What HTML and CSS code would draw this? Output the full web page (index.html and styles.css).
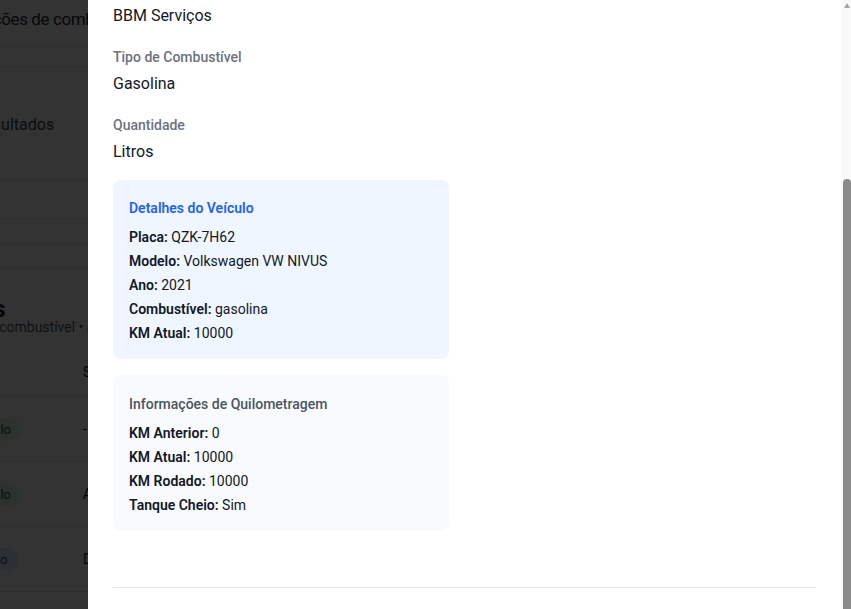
FILE: index.html
```html
<!DOCTYPE html>
<html lang="pt-BR">
<head>
<meta charset="utf-8">
<title>Detalhes da requisição</title>
<link rel="stylesheet" href="styles.css">
</head>
<body>
<div class="page">
  <header class="page-head"><h1 class="page-title">Requisições de combustível</h1></header>
  <div class="page-strip"></div>
  <div class="filters"><span class="filters-text">Filtrar resultados</span></div>
  <div class="filter-row tall"></div>
  <div class="filter-row"></div>
  <div class="filter-row"></div>
  <section class="list">
    <h2 class="list-title">Requisições</h2>
    <p class="list-sub">12 requisições de combustível • atualizado hoje</p>
    <div class="table">
      <div class="trow thead"><span class="cell-badge">Tipo</span><span class="cell-text">Solicitante</span></div>
      <div class="trow"><span class="cell-badge"><span class="badge green">Por veículo</span></span><span class="cell-text">-</span></div>
      <div class="trow"><span class="cell-badge"><span class="badge green">Por veículo</span></span><span class="cell-text">Ana Souza</span></div>
      <div class="trow"><span class="cell-badge"><span class="badge blue">Por cartão</span></span><span class="cell-text">Diego Lima</span></div>
    </div>
  </section>
</div>

<div class="overlay"></div>

<aside class="drawer">
  <div class="drawer-content">
    <div class="fields">
      <div class="field"><p class="value">BBM Serviços</p></div>
      <div class="field"><p class="label">Tipo de Combustível</p><p class="value">Gasolina</p></div>
      <div class="field"><p class="label">Quantidade</p><p class="value">Litros</p></div>
    </div>
    <div class="cards">
      <div class="card-col">
        <div class="card card-blue">
          <h3 class="card-title">Detalhes do Veículo</h3>
          <ul class="info">
            <li><strong>Placa:</strong> QZK-7H62</li>
            <li><strong>Modelo:</strong> Volkswagen VW NIVUS</li>
            <li><strong>Ano:</strong> 2021</li>
            <li><strong>Combustível:</strong> gasolina</li>
            <li><strong>KM Atual:</strong> 10000</li>
          </ul>
        </div>
        <div class="card card-gray">
          <h3 class="card-title">Informações de Quilometragem</h3>
          <ul class="info">
            <li><strong>KM Anterior:</strong> 0</li>
            <li><strong>KM Atual:</strong> 10000</li>
            <li><strong>KM Rodado:</strong> 10000</li>
            <li><strong>Tanque Cheio:</strong> Sim</li>
          </ul>
        </div>
      </div>
      <div class="card-col"></div>
    </div>
    <div class="footer"></div>
  </div>
  <div class="scrollbar"><span class="sb-arrow"></span><span class="sb-thumb"></span></div>
</aside>
</body>
</html>
```

FILE: styles.css
```css
* { box-sizing: border-box; }
html, body { margin: 0; height: 100%; }
body {
  font-family: Roboto, "Noto Sans", "Liberation Sans", sans-serif;
  color: #111827;
  background: #ffffff;
  overflow: hidden;
}

/* ---------- background page ---------- */
.page { margin-left: -76px; width: 820px; }
.page-head { height: 47px; border-bottom: 1px solid #e5e7eb; padding: 6px 0 0 16px; }
.page-title { margin: 0; font-size: 17px; line-height: 26px; letter-spacing: -0.4px; font-weight: 400; color: #1f2937; white-space: nowrap; }
.page-strip { height: 20px; border-bottom: 1px solid #e5e7eb; }
.filters { height: 113px; border-bottom: 1px solid #e5e7eb; display: flex; align-items: center; padding-left: 10px; }
.filters-text { font-size: 16px; color: #374151; padding-top: 3px; }
.filter-row { height: 25px; border-bottom: 1px solid #e5e7eb; }
.filter-row.tall { height: 39px; }
.list { padding-top: 31px; }
.list-title { margin: 0 0 0 -50px; font-size: 24px; line-height: 18px; font-weight: 700; color: #111827; white-space: nowrap; }
.list-sub { margin: 0 0 0 -38px; font-size: 14px; line-height: 18px; color: #4b5563; white-space: nowrap; }
.table { margin-top: 0; }
.trow { display: flex; align-items: center; height: 65px; border-bottom: 1px solid #e5e7eb; }
.trow.thead { height: 61px; align-items: flex-start; padding-top: 26px; font-size: 14px; line-height: 20px; color: #374151; }
.cell-badge { width: 159px; flex-shrink: 0; padding-left: 13px; }
.cell-text { font-size: 14px; color: #111827; white-space: nowrap; }
.badge { display: inline-block; font-size: 13px; line-height: 23px; padding: 0 10px; border-radius: 12px; }
.badge.green { background: #dcfce7; color: #166534; }
.badge.blue { background: #dbeafe; color: #1e40af; }

.overlay { position: fixed; inset: 0; background: rgba(0, 0, 0, 0.8); }

/* ---------- drawer ---------- */
.drawer {
  position: fixed;
  top: 0; bottom: 0; left: 88px; right: 0;
  display: flex;
  background: #ffffff;
  overflow: hidden;
}
.drawer-content { flex: 1; padding: 4px 25px 0 25px; }
.fields { display: flex; flex-direction: column; gap: 19px; }
.field p { margin: 0; }
.field .label { font-size: 14px; line-height: 20px; font-weight: 500; color: #6b7280; margin-bottom: 5px; }
.value { font-size: 16px; line-height: 24px; color: #111827; }

.cards { margin-top: 16px; display: grid; grid-template-columns: 1fr 1fr; column-gap: 32px; }
.card-col { display: flex; flex-direction: column; gap: 16px; }
.card { border-radius: 8px; padding: 16px; }
.card-blue { background: #eff6ff; }
.card-gray { background: #f9fafb; padding-top: 17px; }
.card-title { margin: 0 0 7px; font-size: 14px; line-height: 24px; }
.card-blue .card-title { color: #2563eb; font-weight: 600; }
.card-gray .card-title { color: #4b5563; font-weight: 500; }
.info { list-style: none; margin: 0; padding: 0; display: flex; flex-direction: column; gap: 4px; }
.info li { font-size: 14px; line-height: 20px; color: #111827; }
.info strong { font-weight: 600; }

.footer { margin-top: 56px; border-top: 1px solid #e5e7eb; height: 60px; }

/* ---------- scrollbar ---------- */
.scrollbar { width: 10px; background: #f9f9f9; display: flex; flex-direction: column; }
.sb-arrow {
  width: 0; height: 0;
  margin: 3px 0 0 2.5px;
  border-left: 3.5px solid transparent;
  border-right: 3.5px solid transparent;
  border-bottom: 5px solid #a3a3a3;
}
.sb-thumb {
  margin-top: auto;
  margin-left: 2px;
  width: 8px;
  height: 430px;
  background: #8b8b8b;
  border-radius: 4px 4px 0 0;
}
```
